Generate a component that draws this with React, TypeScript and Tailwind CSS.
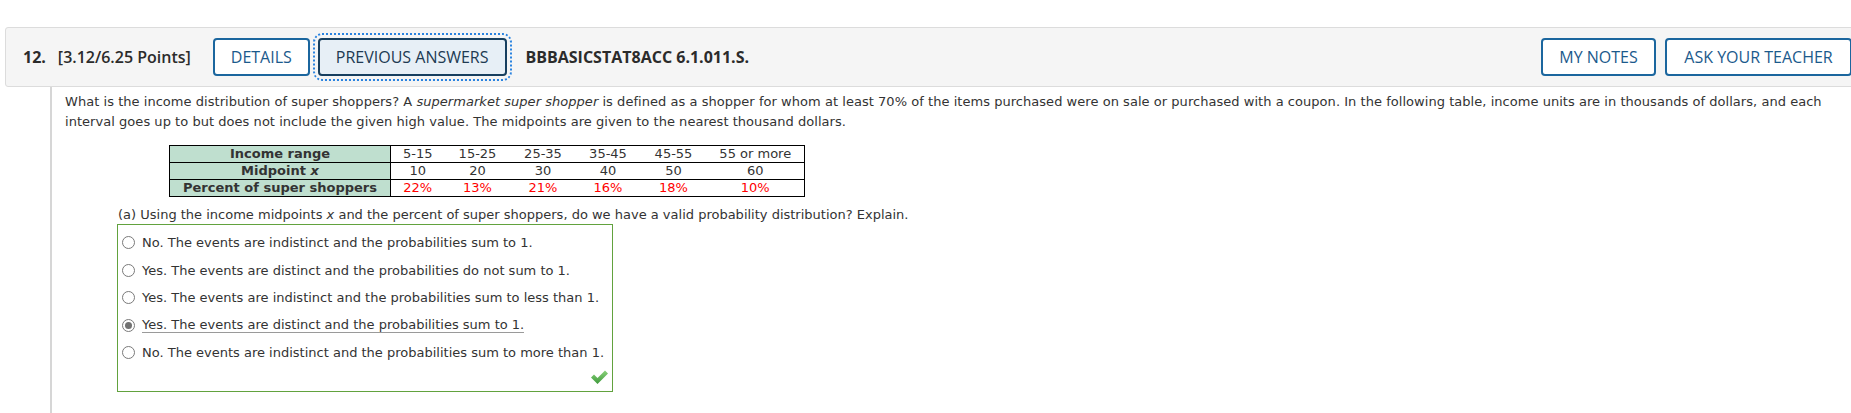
import React from "react";

const options = [
  "No. The events are indistinct and the probabilities sum to 1.",
  "Yes. The events are distinct and the probabilities do not sum to 1.",
  "Yes. The events are indistinct and the probabilities sum to less than 1.",
  "Yes. The events are distinct and the probabilities sum to 1.",
  "No. The events are indistinct and the probabilities sum to more than 1.",
];

const ranges = ["5-15", "15-25", "25-35", "35-45", "45-55", "55 or more"];
const mids = ["10", "20", "30", "40", "50", "60"];
const pcts = ["22%", "13%", "21%", "16%", "18%", "10%"];

const Radio = ({ checked }: { checked?: boolean }) => (
  <span className="flex h-[13px] w-[13px] shrink-0 items-center justify-center rounded-full border border-[#7a7a7a] bg-white">
    {checked && <span className="h-[7px] w-[7px] rounded-full bg-[#727272]" />}
  </span>
);

const Check = () => (
  <svg width="17" height="14" viewBox="0 0 17 14">
    <defs>
      <linearGradient id="chk" x1="0" y1="0" x2="0" y2="1">
        <stop offset="0" stopColor="#8ad27a" />
        <stop offset="1" stopColor="#3f9a3c" />
      </linearGradient>
    </defs>
    <polygon points="0,7.5 3,4.5 6.5,8 14,0.5 17,3.5 6.5,14" fill="url(#chk)" />
  </svg>
);

export default function App() {
  const head = { fontFamily: '"Open Sans", "Noto Sans", sans-serif' };
  const body = { fontFamily: '"DejaVu Sans", Verdana, sans-serif' };

  return (
    <div className="h-[413px] w-[1851px] overflow-hidden bg-white pl-[5px] pt-[27px] text-[#333]">
      {/* question header */}
      <div
        style={head}
        className="flex h-[60px] w-[1856px] items-center rounded-[3px] border border-[#dcdcdc] bg-[#f5f5f5] pl-[17px] pr-[8px] text-[16px]"
      >
        <span className="font-bold text-[#2b2b2b]">12.</span>
        <span className="ml-[12px] font-semibold text-[#2b2b2b]">[3.12/6.25 Points]</span>
        <button className="ml-[22px] h-[38px] rounded-[4px] border-2 border-[#1b669e] bg-white px-[16px] text-[#1b5a8c]">
          DETAILS
        </button>
        <button className="ml-[8px] h-[38px] rounded-[4px] border-2 border-[#173f5f] bg-[#e7eff6] px-[16px] text-[#203a52] outline-2 outline-offset-[3px] outline-dotted outline-[#2a83e0]">
          PREVIOUS ANSWERS
        </button>
        <span className="ml-[19px] font-bold text-[#2b2b2b]">BBBASICSTAT8ACC 6.1.011.S.</span>
        <div className="ml-auto flex gap-[9px]">
          <button className="h-[38px] w-[115px] rounded-[4px] border-2 border-[#1b669e] bg-white text-[#1b5a8c]">
            MY NOTES
          </button>
          <button className="h-[38px] w-[187px] rounded-[4px] border-2 border-[#1b669e] bg-white text-[#1b5a8c]">
            ASK YOUR TEACHER
          </button>
        </div>
      </div>

      {/* question body */}
      <div style={body} className="ml-[45px] h-[330px] border-l-2 border-[#d6d6d6] pl-[13px] pt-[5px] text-[13px]">
        <p className="whitespace-nowrap leading-[20px] tracking-[0.04px]">
          What is the income distribution of super shoppers? A <i>supermarket super shopper</i> is defined as a shopper for whom at least 70% of the items purchased were on sale or purchased with a coupon. In the following table, income units are in thousands of dollars, and each
          <br />
          interval goes up to but does not include the given high value. The midpoints are given to the nearest thousand dollars.
        </p>

        <table className="ml-[104px] mt-[13px] w-[636px] table-fixed border-collapse border border-black text-center leading-[16px]">
          <colgroup>
            <col className="w-[221px]" />
            <col className="w-[54px]" />
            <col className="w-[66px]" />
            <col className="w-[65px]" />
            <col className="w-[65px]" />
            <col className="w-[66px]" />
            <col />
          </colgroup>
          <tbody>
            <tr>
              <th className="border border-black bg-[#bfdfcf] p-0 font-bold">Income range</th>
              {ranges.map((r) => (
                <td key={r} className="border-y border-black p-0">{r}</td>
              ))}
            </tr>
            <tr>
              <th className="border border-black bg-[#bfdfcf] p-0 font-bold">
                Midpoint <i>x</i>
              </th>
              {mids.map((m) => (
                <td key={m} className="border-y border-black p-0">{m}</td>
              ))}
            </tr>
            <tr>
              <th className="border border-black bg-[#bfdfcf] p-0 font-bold">Percent of super shoppers</th>
              {pcts.map((p) => (
                <td key={p} className="border-y border-black p-0 text-[#ff0000]">{p}</td>
              ))}
            </tr>
          </tbody>
        </table>

        <p className="ml-[53px] mt-[9px] leading-[18px]">
          (a) Using the income midpoints <i>x</i> and the percent of super shoppers, do we have a valid probability distribution? Explain.
        </p>

        <div className="ml-[52px] flex h-[168px] w-[496px] flex-col border border-[#62a23e] pl-[4px] pt-[4px]">
          {options.map((o, i) => (
            <div key={i} className="flex h-[27.5px] items-center">
              <Radio checked={i === 3} />
              {i === 3 ? (
                <span className="ml-[7px] inline-block border-b border-[#9a9a9a] leading-[15px]">{o}</span>
              ) : (
                <span className="ml-[7px]">{o}</span>
              )}
            </div>
          ))}
          <div className="mt-[3px] flex justify-end pr-[4px]">
            <Check />
          </div>
        </div>
      </div>
    </div>
  );
}
